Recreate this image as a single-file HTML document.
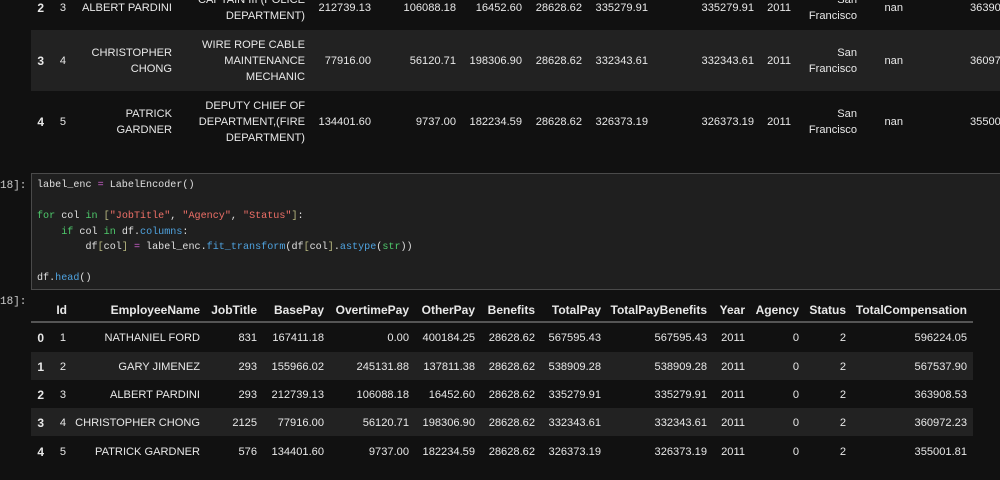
<!DOCTYPE html>
<html><head><meta charset="utf-8"><style>
body{margin:0;width:1000px;height:480px;background:#111;overflow:hidden;position:relative;font-family:"Liberation Sans",sans-serif;font-size:11.1px;color:#e8e8e8}
.t{position:absolute;line-height:16px;white-space:nowrap}
.b{font-weight:bold;font-size:12px}
.bg{position:absolute;background:#222}
.code{position:absolute;left:31px;top:173px;width:980px;height:115px;background:#1f1f1f;border:1px solid #4a4a4a}
.c{position:absolute;left:37px;font-family:"Liberation Mono",monospace;font-size:10.1px;line-height:16px;color:#e0e0e0;white-space:pre}
.k{color:#4ec96b}.s{color:#f07068}.o{color:#d060d0}.f{color:#4fa3e0}.br{color:#b8b880}
</style></head><body>
<div class="bg" style="left:31px;top:30px;width:969px;height:61px"></div>
<div class="bg" style="left:31px;top:352px;width:942px;height:28px"></div>
<div class="bg" style="left:31px;top:408px;width:942px;height:28px"></div>
<div class="code"></div>
<div class="t" style="left:0;top:178px;color:#ccc;font-family:'Liberation Mono',monospace;font-size:11px">18]:</div>
<div class="t" style="left:0;top:294px;color:#ccc;font-family:'Liberation Mono',monospace;font-size:11px">18]:</div>
<div class="c" style="top:178px">label_enc <span class="o">=</span> LabelEncoder()</div>
<div class="c" style="top:209px"><span class="k">for</span> col <span class="k">in</span> <span class="br">[</span><span class="s">"JobTitle"</span>, <span class="s">"Agency"</span>, <span class="s">"Status"</span><span class="br">]</span>:</div>
<div class="c" style="top:225px">    <span class="k">if</span> col <span class="k">in</span> df.<span class="f">columns</span>:</div>
<div class="c" style="top:240px">        df<span class="br">[</span>col<span class="br">]</span> <span class="o">=</span> label_enc.<span class="f">fit_transform</span>(df<span class="br">[</span>col<span class="br">]</span>.<span class="f">astype</span>(<span class="k">str</span>))</div>
<div class="c" style="top:271px">df.<span class="f">head</span>()</div>
<div style="position:absolute;left:31px;top:321px;width:942px;height:2px;background:#555"></div>
<script>
function T(txt,r,y,cls){var d=document.createElement('div');d.className='t '+(cls||'');d.style.right=(1000-r)+'px';d.style.top=(y-8)+'px';d.style.textAlign='right';d.innerHTML=txt;document.body.appendChild(d);}
var top3=[[8,'2','3',['ALBERT PARDINI'],['CAPTAIN III (POLICE','DEPARTMENT)'],'212739.13','106088.18','16452.60','335279.91','363908.53'],
[61,'3','4',['CHRISTOPHER','CHONG'],['WIRE ROPE CABLE','MAINTENANCE','MECHANIC'],'77916.00','56120.71','198306.90','332343.61','360972.23'],
[122,'4','5',['PATRICK','GARDNER'],['DEPUTY CHIEF OF','DEPARTMENT,(FIRE','DEPARTMENT)'],'134401.60','9737.00','182234.59','326373.19','355001.81']];
top3.forEach(function(r){var y=r[0];T(r[1],44,y,'b');T(r[2],66,y);
 T(r[3].join('<br>'),172,y-(r[3].length-1)*8);
 T(r[4].join('<br>'),305,y-(r[4].length-1)*8);
 T(r[5],371,y);T(r[6],456,y);T(r[7],522,y);T('28628.62',582,y);T(r[8],648,y);T(r[8],754,y);T('2011',791,y);
 T('San<br>Francisco',857,y-8);T('nan',903,y);
 var d=document.createElement('div');d.className='t';d.style.left='970px';d.style.top=(y-8)+'px';d.textContent=r[9];document.body.appendChild(d);});
var rx=[63,200,257,324,409,475,535,601,707,745,799,846,967];
var hd=['Id','EmployeeName','JobTitle','BasePay','OvertimePay','OtherPay','Benefits','TotalPay','TotalPayBenefits','Year','Agency','Status','TotalCompensation'];
hd.forEach(function(h,i){T(h,i==0?67:rx[i],310,'b');});
var rows=[['1','NATHANIEL FORD','831','167411.18','0.00','400184.25','28628.62','567595.43','567595.43','2011','0','2','596224.05'],
['2','GARY JIMENEZ','293','155966.02','245131.88','137811.38','28628.62','538909.28','538909.28','2011','0','2','567537.90'],
['3','ALBERT PARDINI','293','212739.13','106088.18','16452.60','28628.62','335279.91','335279.91','2011','0','2','363908.53'],
['4','CHRISTOPHER CHONG','2125','77916.00','56120.71','198306.90','28628.62','332343.61','332343.61','2011','0','2','360972.23'],
['5','PATRICK GARDNER','576','134401.60','9737.00','182234.59','28628.62','326373.19','326373.19','2011','0','2','355001.81']];
var ys=[338,367,395,423,452];
rows.forEach(function(r,j){var y=ys[j];T(String(j),44,y,'b');
 r.forEach(function(v,i){T(v,i==0?66:rx[i],y);});});
</script>
</body></html>
